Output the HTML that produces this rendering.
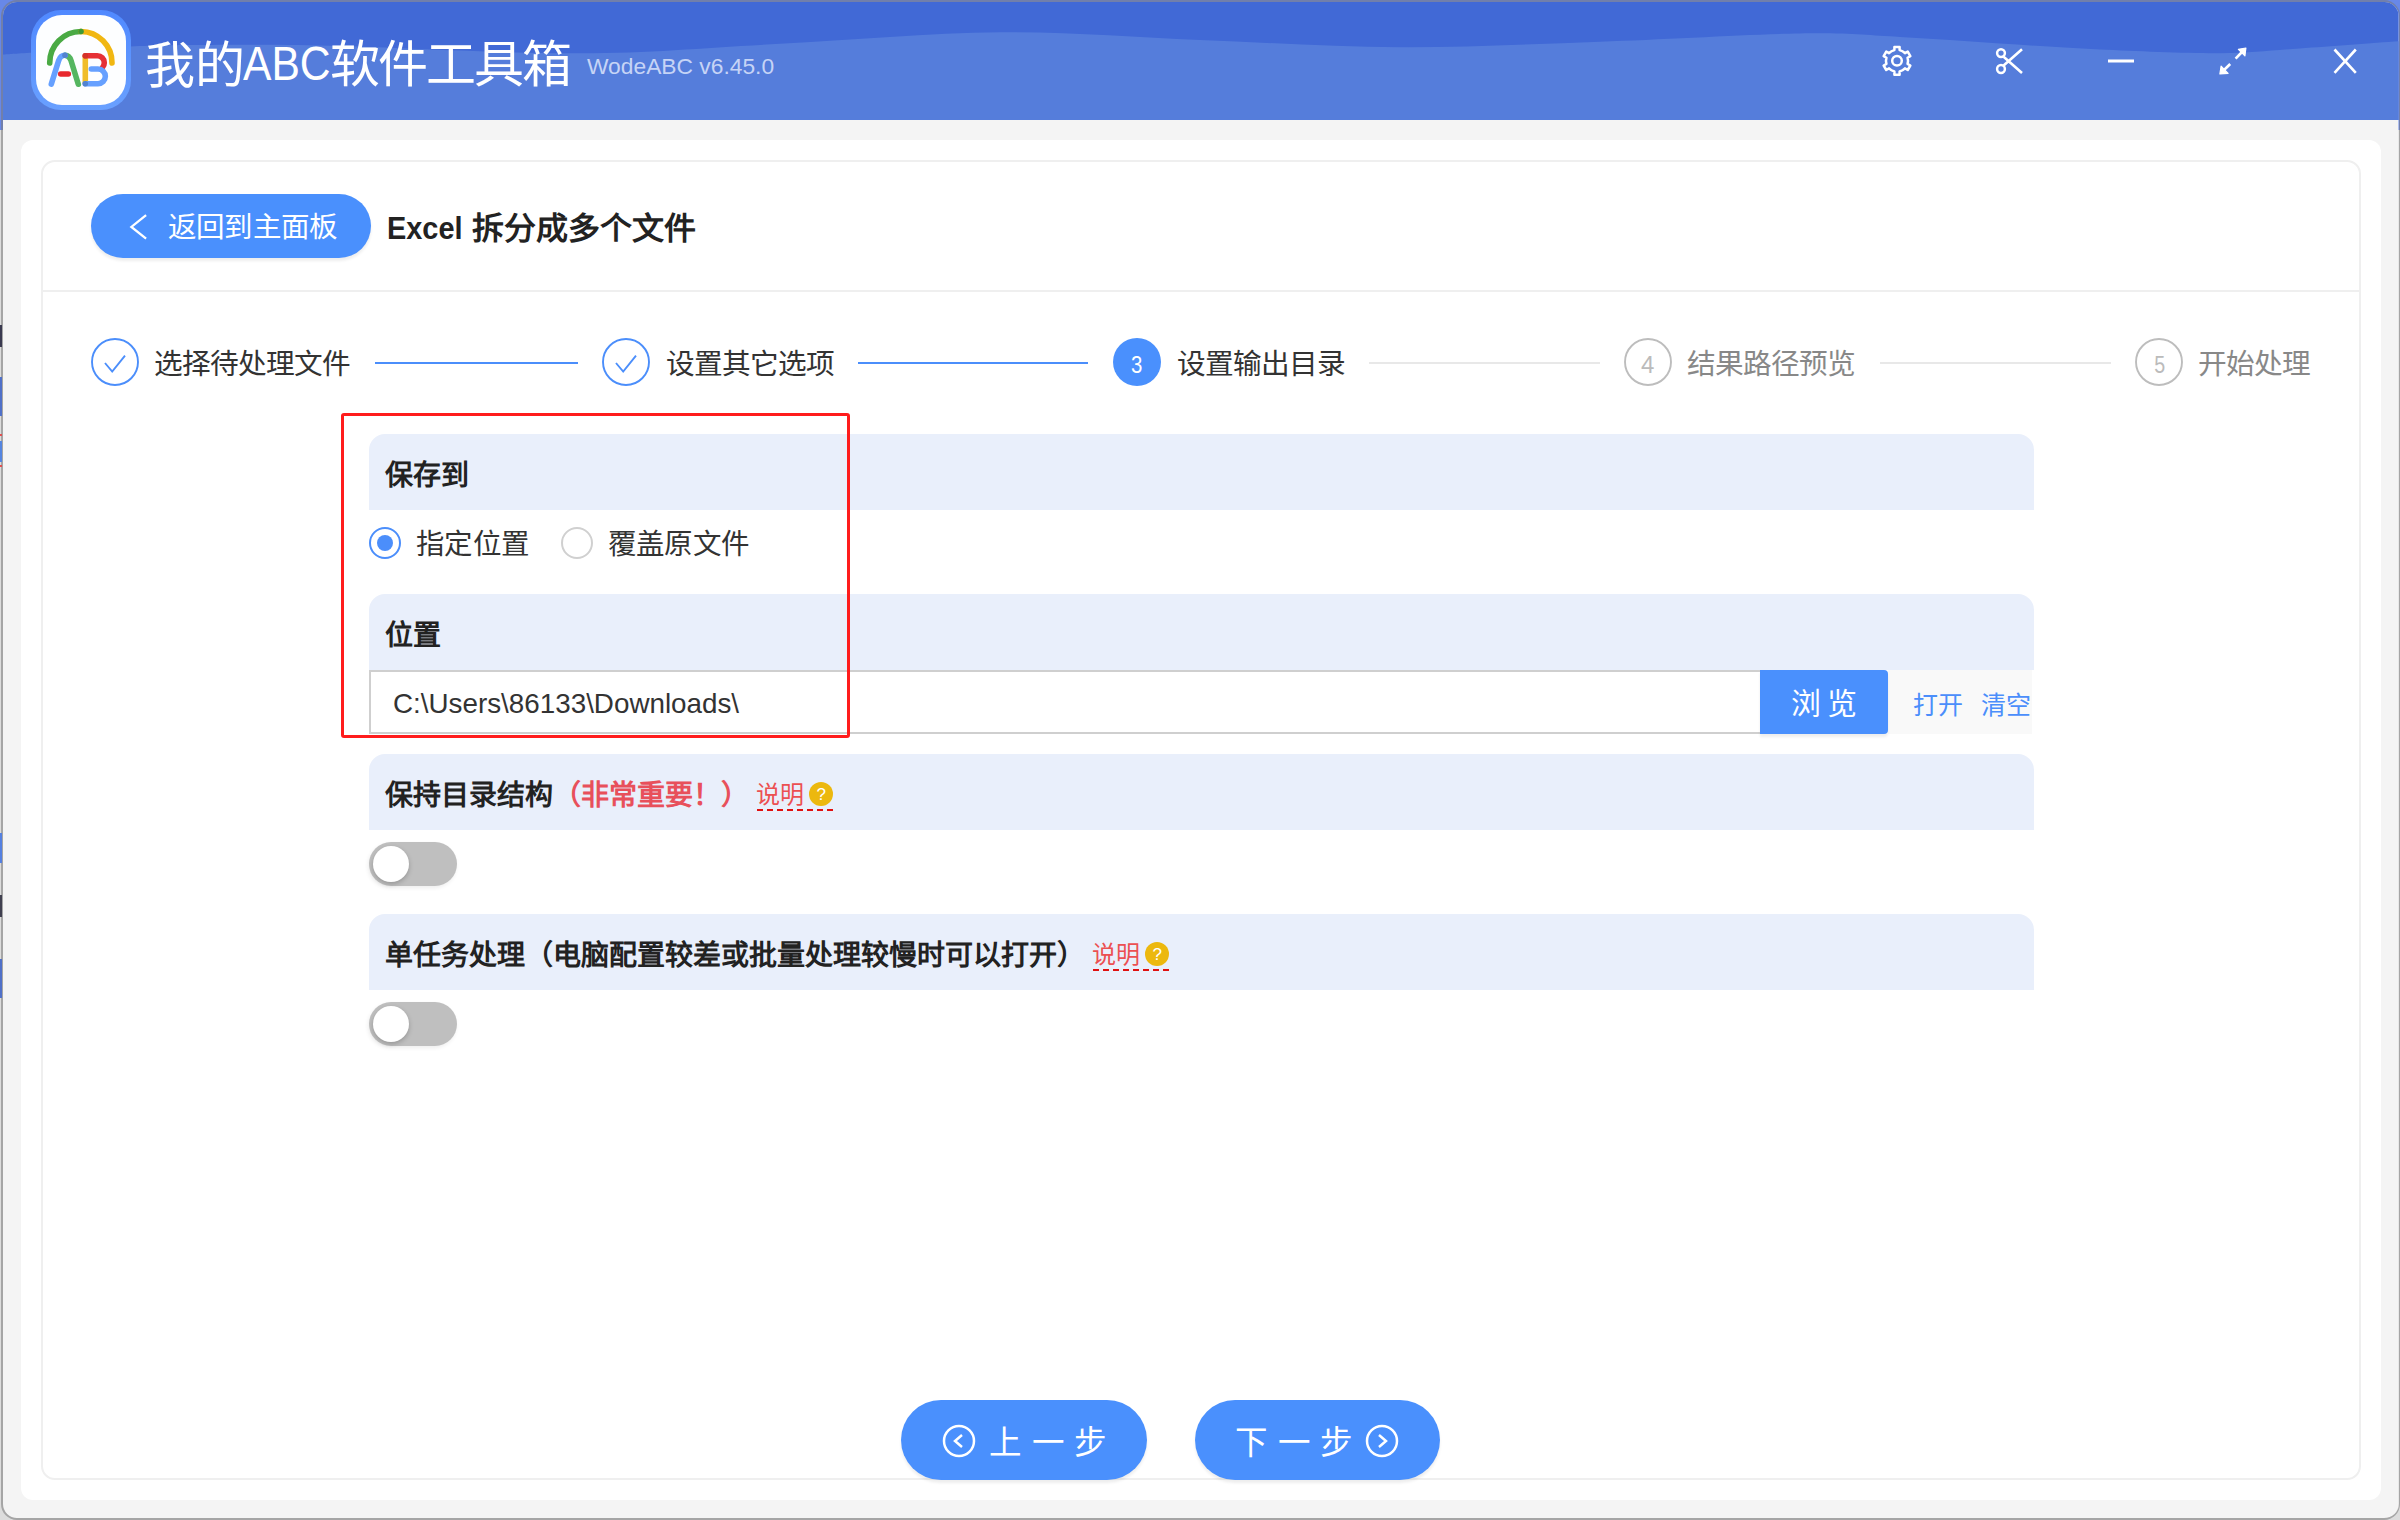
<!DOCTYPE html>
<html lang="zh-CN">
<head>
<meta charset="utf-8">
<style>
*{box-sizing:border-box;margin:0;padding:0}
html,body{width:2400px;height:1520px;overflow:hidden;font-family:"Liberation Sans",sans-serif}
body{background:linear-gradient(#6888e8 0,#6888e8 130px,#dcdcdc 130px,#dcdcdc 100%)}
.abs{position:absolute}
#win{position:absolute;left:0;top:0;width:2400px;height:1520px;background:#f4f4f4;overflow:hidden;clip-path:inset(2px 1.5px 2px 3px round 14px)}
#frame{position:absolute;left:1px;top:0;width:2399px;height:1520px;border-radius:16px;border:2px solid rgba(120,120,120,0.55);border-right-width:1.5px;pointer-events:none}
#hdr{position:absolute;left:0;top:0;width:2400px;height:120px;background:#4169d6;overflow:hidden}
#panel{position:absolute;left:21px;top:140px;width:2360px;height:1360px;background:#fff;border-radius:12px}
#card{position:absolute;left:41px;top:160px;width:2320px;height:1320px;border:2px solid #efefef;border-radius:14px;background:#fff}
#sep{position:absolute;left:43px;top:290px;width:2316px;height:2px;background:#efefef}
.t{position:absolute;white-space:nowrap;line-height:1}
.btn{position:absolute;background:#4a90fd;box-shadow:0 3px 3px rgba(0,0,0,0.07)}
.sh{position:absolute;left:369px;width:1665px;background:#e9effb;border-radius:16px 16px 0 0}
.lbl{position:absolute;left:385px;font-size:28px;letter-spacing:0;font-weight:bold;color:#222;white-space:nowrap;line-height:1}
.stxt{position:absolute;font-size:28.7px;letter-spacing:-1px;color:#333;white-space:nowrap;line-height:1;top:350px}
.sline{position:absolute;top:362px;height:2px}
.tog{position:absolute;left:369px;width:88px;height:44px;border-radius:22px;background:#bfbfbf;box-shadow:-1px 2px 4px rgba(0,0,0,0.07)}
.tog::after{content:"";position:absolute;left:3.8px;top:3.8px;width:36.4px;height:36.4px;border-radius:50%;background:#fff;box-shadow:0 2px 5px rgba(0,0,0,0.22)}
.num{position:absolute;font-size:24px;line-height:1;white-space:nowrap}
</style>
</head>
<body>
<div id="win">
  <div id="hdr">
    <svg class="abs" style="left:0;top:0" width="2400" height="120" viewBox="0 0 2400 120">
      <path d="M0.0 54.7 C8.3 54.2 8.3 54.1 30.0 52.7 C51.7 51.3 101.7 47.8 130.0 46.5 C158.3 45.2 166.7 45.1 200.0 45.0 C233.3 44.9 266.7 44.3 330.0 45.7 C393.3 47.1 505.0 53.6 580.0 53.3 C655.0 53.0 710.0 47.2 780.0 43.8 C850.0 40.2 930.0 32.9 1000.0 32.3 C1070.0 31.7 1133.3 37.5 1200.0 40.0 C1266.7 42.5 1333.3 47.0 1400.0 47.3 C1466.7 47.6 1533.3 44.0 1600.0 41.7 C1666.7 39.4 1750.0 34.3 1800.0 33.5 C1850.0 32.7 1866.7 35.3 1900.0 37.0 C1933.3 38.7 1966.7 41.4 2000.0 43.5 C2033.3 45.6 2063.3 47.9 2100.0 49.5 C2136.7 51.1 2186.7 53.4 2220.0 53.2 C2253.3 53.0 2270.0 50.5 2300.0 48.5 C2330.0 46.5 2375.0 42.9 2400.0 41.3 V120 H0 Z" fill="#557ddb"/>
    </svg>
    <!-- logo -->
    <svg class="abs" style="left:0;top:0" width="140" height="120" viewBox="0 0 140 120">
      <defs><linearGradient id="ring" x1="0" y1="0" x2="0" y2="1"><stop offset="0" stop-color="#5089ff"/><stop offset="1" stop-color="#69a0ff"/></linearGradient></defs>
      <rect x="31" y="10" width="100" height="100" rx="30" fill="url(#ring)"/>
      <rect x="36" y="15" width="90" height="90" rx="26" fill="#fdfeff"/>
      <g fill="none" stroke-linecap="round" stroke-width="5.6">
        <path d="M49.7 63 A31.2 31.2 0 0 1 81 31.5" stroke="#4aaa44"/>
        <path d="M81 31.5 A31.2 31.2 0 0 1 112 63" stroke="#f1b712"/>
        <path d="M65 55.3 Q69.5 55.6 71 60.5 L78.3 84.2" stroke="#55b660"/>
        <path d="M51.3 84.2 L58.7 60.5 Q60.5 55.3 65 55.3" stroke="#66a0ff"/>
        <path d="M60.7 74 H68.3" stroke="#e8282e"/>
        <path d="M85.3 55.7 V83.7" stroke="#f0bd2a" stroke-linecap="butt"/>
        <path d="M85.3 55.7 H97.3 A7 7 0 0 1 104.3 62.7 Q104.3 65.5 102.5 67.5" stroke="#e63035"/>
        <path d="M91.3 69 H98 A7.35 7.35 0 0 1 98 83.7 H85.3" stroke="#66a0ff"/>
      </g>
      <g>
        <circle cx="81" cy="31.5" r="2.8" fill="#3d9a36"/>
        <circle cx="65" cy="55.3" r="2.8" fill="#5283d0"/>
        <circle cx="85.3" cy="55.7" r="2.8" fill="#d33228"/>
        <circle cx="85.3" cy="83.7" r="2.8" fill="#5283d0"/>
      </g>
    </svg>
    <div id="t_wode" class="t" style="left:144.8px;top:41px;font-size:50px;color:#fff">我的</div>
    <div id="t_abc" class="t" style="left:243px;top:39.5px;font-size:48px;color:#fff;transform:scaleX(0.888);transform-origin:0 0">ABC</div>
    <div id="t_soft" class="t" style="left:330px;top:39.6px;font-size:50px;letter-spacing:-2px;color:#fff">软件工具箱</div>
    <div id="t_ver" class="t" style="left:587px;top:55px;font-size:22.8px;color:#c6d4f6">WodeABC v6.45.0</div>
    <!-- header icons -->
    <svg class="abs" style="left:1860px;top:30px" width="520" height="64" viewBox="1860 30 520 64" fill="none" stroke="#fff" stroke-width="2.5" stroke-linejoin="round">
      <path d="M1894.40 50.11 L1894.40 46.90 L1899.60 46.90 L1899.60 50.11 A11.0 11.0 0 0 1 1904.96 53.20 L1907.74 51.60 L1910.34 56.10 L1907.56 57.71 A11.0 11.0 0 0 1 1907.56 63.89 L1910.34 65.50 L1907.74 70.00 L1904.96 68.40 A11.0 11.0 0 0 1 1899.60 71.49 L1899.60 74.70 L1894.40 74.70 L1894.40 71.49 A11.0 11.0 0 0 1 1889.04 68.40 L1886.26 70.00 L1883.66 65.50 L1886.44 63.89 A11.0 11.0 0 0 1 1886.44 57.71 L1883.66 56.10 L1886.26 51.60 L1889.04 53.20 A11.0 11.0 0 0 1 1894.40 50.11 Z"/>
      <circle cx="1897" cy="60.8" r="4.8"/>
      <circle cx="2001" cy="53.1" r="3.9"/>
      <circle cx="2001" cy="69" r="3.9"/>
      <path d="M2003.6 56.8 L2022 73 M2003.6 65.4 L2022 49.2" stroke-width="2.6"/>
      <path d="M2108 61 H2134" stroke-width="3"/>
      <path d="M2222.5 71.5 L2230.2 64 M2235.6 58.6 L2242.5 51.5" stroke-width="2.6"/>
      <path d="M2219.9 73.9 L2221.1 66.2 L2228.1 73.4 Z" fill="#fff" stroke-width="1.2"/>
      <path d="M2245.9 48 L2238.4 49.3 L2244.9 55.8 Z" fill="#fff" stroke-width="1.2"/>
      <path d="M2334.5 49.5 L2355.8 72.8 M2355.8 49.5 L2334.5 72.8" stroke-width="2.6"/>
    </svg>
  </div>
  <div id="panel"></div>
  <div id="card"></div>
  <div id="sep"></div>

  <!-- back button -->
  <div class="btn" style="left:91px;top:194px;width:280px;height:64px;border-radius:32px"></div>
  <svg class="abs" style="left:120px;top:205px" width="40" height="44" viewBox="0 0 40 44"><path d="M26.1 10.2 L11.4 21.9 L26.1 33.6" fill="none" stroke="#fff" stroke-width="2.3" stroke-linecap="butt" stroke-linejoin="miter"/></svg>
  <div id="t_back" class="t" style="left:168px;top:213.4px;font-size:28.5px;letter-spacing:-0.8px;color:#fff">返回到主面板</div>
  <div id="t_excel" class="t" style="left:386.8px;top:213px;font-size:31px;font-weight:bold;color:#222;transform:scaleX(0.932);transform-origin:0 0">Excel</div>
  <div id="t_excj" class="t" style="left:471.8px;top:213px;font-size:32px;font-weight:bold;color:#222;transform:scaleY(0.96);transform-origin:0 0">拆分成多个文件</div>

  <!-- steps -->
  <svg class="abs" style="left:0;top:300px" width="2400" height="120" viewBox="0 300 2400 120">
    <circle cx="115" cy="362" r="23" fill="none" stroke="#4b8efb" stroke-width="1.9"/>
    <path d="M105 363 L112.2 371.5 L125 355.7" fill="none" stroke="#4b8efb" stroke-width="1.9"/>
    <circle cx="626" cy="362" r="23" fill="none" stroke="#4b8efb" stroke-width="1.9"/>
    <path d="M616 363 L623.2 371.5 L636 355.7" fill="none" stroke="#4b8efb" stroke-width="1.9"/>
    <circle cx="1137" cy="362" r="24" fill="#4a90fd"/>
    <circle cx="1648" cy="362" r="23" fill="none" stroke="#bdbdbd" stroke-width="1.9"/>
    <circle cx="2159" cy="362" r="23" fill="none" stroke="#bdbdbd" stroke-width="1.9"/>
  </svg>
  <div id="n3" class="num" style="left:1130px;top:353px;transform:scaleX(0.85);color:#fff">3</div>
  <div id="n4" class="num" style="left:1641px;top:353px;color:#bbb">4</div>
  <div id="n5" class="num" style="left:2153px;top:353px;transform:scaleX(0.82);color:#bbb">5</div>
  <div id="s1" class="stxt" style="left:154px">选择待处理文件</div>
  <div class="sline" style="left:375px;width:203px;background:#4b8efb"></div>
  <div id="s2" class="stxt" style="left:666px">设置其它选项</div>
  <div class="sline" style="left:858px;width:230px;background:#4b8efb"></div>
  <div id="s3" class="stxt" style="left:1177px">设置输出目录</div>
  <div class="sline" style="left:1369px;width:231px;background:#e8e8e8"></div>
  <div id="s4" class="stxt" style="left:1687px;color:#888">结果路径预览</div>
  <div class="sline" style="left:1880px;width:231px;background:#e8e8e8"></div>
  <div id="s5" class="stxt" style="left:2198px;color:#888">开始处理</div>

  <!-- section: save to -->
  <div class="sh" style="top:434px;height:76px"></div>
  <div id="l_save" class="lbl" style="top:462px">保存到</div>
  <div class="abs" style="left:369px;top:527px;width:32px;height:32px;border-radius:50%;border:2px solid #4b8efb"></div>
  <div class="abs" style="left:377px;top:535px;width:16px;height:16px;border-radius:50%;background:#4b8efb"></div>
  <div id="r1" class="t" style="left:416px;top:530px;font-size:28.5px;letter-spacing:-0.7px;color:#333">指定位置</div>
  <div class="abs" style="left:561px;top:527px;width:32px;height:32px;border-radius:50%;border:2px solid #d0d0d0"></div>
  <div id="r2" class="t" style="left:608px;top:530px;font-size:28.5px;letter-spacing:-0.8px;color:#333">覆盖原文件</div>

  <!-- section: location -->
  <div class="sh" style="top:594px;height:76px"></div>
  <div id="l_pos" class="lbl" style="top:621.5px">位置</div>
  <div class="abs" style="left:369px;top:670px;width:1391px;height:64px;border:2px solid #cfcfcf;border-right:none;background:#fff"></div>
  <div id="path" class="t" style="left:393px;top:690px;font-size:27.8px;color:#333">C:\Users\86133\Downloads\</div>
  <div class="abs" style="left:1888px;top:670px;width:144px;height:64px;background:#f9f9f9"></div>
  <div class="btn" style="left:1760px;top:670px;width:128px;height:64px;border-radius:0 4px 4px 0"></div>
  <div id="b_browse" class="t" style="left:1791px;top:689px;font-size:30px;color:#fff;letter-spacing:6px">浏览</div>
  <div id="b_open" class="t" style="left:1913px;top:693px;font-size:25px;color:#4b8efb">打开</div>
  <div id="b_clear" class="t" style="left:1981px;top:693px;font-size:25px;color:#4b8efb">清空</div>

  <!-- section: keep dir structure -->
  <div class="sh" style="top:754px;height:76px"></div>
  <div id="l_kd" class="lbl" style="top:782px">保持目录结构<span style="color:#e8505b">（非常重要！）</span></div>
  <div id="shuo1" class="t" style="left:756px;top:783px;font-size:24px;color:#ec5052">说明</div>
  <div class="abs" style="left:757px;top:808.5px;width:76px;height:0;border-top:2px dashed #e01010"></div>
  <div class="abs" style="left:809px;top:782px;width:24px;height:24px;border-radius:50%;background:#ecb80e"></div>
  <div class="t" style="left:816.5px;top:786px;font-size:17px;color:#fff">?</div>
  <div class="tog" style="top:842px"></div>

  <!-- section: single task -->
  <div class="sh" style="top:914px;height:76px"></div>
  <div id="l_st" class="lbl" style="top:942px">单任务处理（电脑配置较差或批量处理较慢时可以打开）</div>
  <div id="shuo2" class="t" style="left:1092px;top:943px;font-size:24px;color:#ec5052">说明</div>
  <div class="abs" style="left:1093px;top:968.5px;width:76px;height:0;border-top:2px dashed #e01010"></div>
  <div class="abs" style="left:1145px;top:942px;width:24px;height:24px;border-radius:50%;background:#ecb80e"></div>
  <div class="t" style="left:1152.5px;top:946px;font-size:17px;color:#fff">?</div>
  <div class="tog" style="top:1002px"></div>

  <!-- red highlight -->
  <div class="abs" style="left:341px;top:413px;width:509px;height:325px;border:3px solid #ff1c1c;border-radius:3px"></div>

  <!-- bottom buttons -->
  <div class="btn" style="left:901px;top:1400px;width:246px;height:80px;border-radius:40px"></div>
  <svg class="abs" style="left:940px;top:1422px" width="40" height="40" viewBox="0 0 40 40"><circle cx="19" cy="19" r="15" fill="none" stroke="#fff" stroke-width="2.5"/><path d="M22 13 L15 19 L22 25" fill="none" stroke="#fff" stroke-width="2.5"/></svg>
  <div id="prev" class="t" style="left:989px;top:1427px;font-size:32.5px;color:#fff;letter-spacing:9.5px">上一步</div>
  <div class="btn" style="left:1195px;top:1400px;width:245px;height:80px;border-radius:40px"></div>
  <div id="next" class="t" style="left:1235px;top:1427px;font-size:32.5px;color:#fff;letter-spacing:9.5px">下一步</div>
  <svg class="abs" style="left:1363px;top:1422px" width="40" height="40" viewBox="0 0 40 40"><circle cx="19" cy="19" r="15" fill="none" stroke="#fff" stroke-width="2.5"/><path d="M16 13 L23 19 L16 25" fill="none" stroke="#fff" stroke-width="2.5"/></svg>
</div>
<div id="frame"></div>
<div class="abs" style="left:0;top:325px;width:2px;height:22px;background:#3a3a50"></div>
<div class="abs" style="left:0;top:377px;width:2px;height:39px;background:#5070c8"></div>
<div class="abs" style="left:0;top:434px;width:2px;height:2px;background:#e05050"></div>
<div class="abs" style="left:0;top:441px;width:2px;height:21px;background:#5585e0"></div>
<div class="abs" style="left:0;top:465px;width:2px;height:2px;background:#e05050"></div>
<div class="abs" style="left:0;top:833px;width:2px;height:30px;background:#5580e0"></div>
<div class="abs" style="left:0;top:895px;width:2px;height:22px;background:#404050"></div>
<div class="abs" style="left:0;top:959px;width:2px;height:39px;background:#5070c8"></div>
</body>
</html>
